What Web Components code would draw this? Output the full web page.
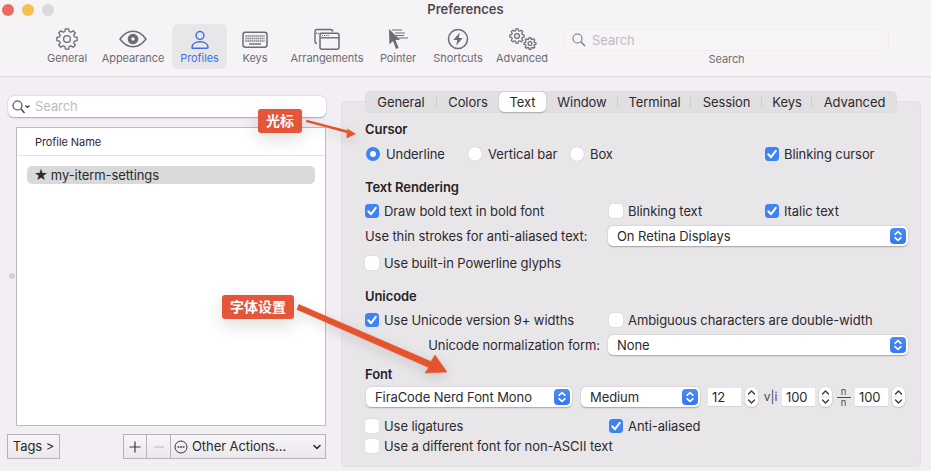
<!DOCTYPE html>
<html>
<head>
<meta charset="utf-8">
<title>Preferences</title>
<style>
  html, body { margin: 0; padding: 0; background: #f2eef3; }
</style>
</head>
<body>
<pref-window>
  <pref-toolbar slot="toolbar" heading="Preferences">
    <tool-item icon="general" wide="54">General</tool-item>
    <tool-item icon="appearance" wide="78">Appearance</tool-item>
    <tool-item icon="profiles" wide="55" active>Profiles</tool-item>
    <tool-item icon="keys" wide="56">Keys</tool-item>
    <tool-item icon="arrangements" wide="88">Arrangements</tool-item>
    <tool-item icon="pointer" wide="54">Pointer</tool-item>
    <tool-item icon="shortcuts" wide="66">Shortcuts</tool-item>
    <tool-item icon="advanced" wide="62">Advanced</tool-item>
    <tool-search></tool-search>
  </pref-toolbar>

  <profile-sidebar slot="sidebar">
    <profile-row>my-iterm-settings</profile-row>
  </profile-sidebar>

  <pref-tabs slot="tabs">
    <pref-tab wide="72" sep>General</pref-tab>
    <pref-tab wide="62">Colors</pref-tab>
    <pref-tab wide="47" selected>Text</pref-tab>
    <pref-tab wide="72" sep>Window</pref-tab>
    <pref-tab wide="73" sep>Terminal</pref-tab>
    <pref-tab wide="71" sep>Session</pref-tab>
    <pref-tab wide="50" sep>Keys</pref-tab>
    <pref-tab wide="85">Advanced</pref-tab>
  </pref-tabs>

  <pref-pane slot="pane">
    <pref-heading>Cursor</pref-heading>
    <pref-row top="5" cols="102px 102px 196px 1fr">
      <mac-radio checked>Underline</mac-radio>
      <mac-radio>Vertical bar</mac-radio>
      <mac-radio>Box</mac-radio>
      <mac-check checked>Blinking cursor</mac-check>
    </pref-row>

    <pref-heading top="13">Text Rendering</pref-heading>
    <pref-row top="4">
      <mac-check checked>Draw bold text in bold font</mac-check>
      <mac-check>Blinking text</mac-check>
      <mac-check checked>Italic text</mac-check>
    </pref-row>
    <pref-row top="5" cols="243px 300px">
      <pref-label>Use thin strokes for anti-aliased text:</pref-label>
      <mac-select>On Retina Displays</mac-select>
    </pref-row>
    <pref-row top="7">
      <mac-check>Use built-in Powerline glyphs</mac-check>
    </pref-row>

    <pref-heading top="13">Unicode</pref-heading>
    <pref-row top="4">
      <mac-check checked>Use Unicode version 9+ widths</mac-check>
      <mac-check class="span">Ambiguous characters are double-width</mac-check>
    </pref-row>
    <pref-row top="5" cols="235px 300px" gap="8">
      <pref-label end>Unicode normalization form:</pref-label>
      <mac-select>None</mac-select>
    </pref-row>

    <pref-heading top="9">Font</pref-heading>
    <font-row top="3">
      <mac-select ml="1" wide="206">FiraCode Nerd Font Mono</mac-select>
      <mac-select ml="9" wide="119">Medium</mac-select>
      <num-field ml="8" value="12"></num-field>
      <glyph-mark kind="vli" wide="24"></glyph-mark>
      <num-field value="100"></num-field>
      <glyph-mark kind="nn" wide="23"></glyph-mark>
      <num-field value="100"></num-field>
    </font-row>
    <pref-row top="9">
      <mac-check>Use ligatures</mac-check>
      <mac-check checked>Anti-aliased</mac-check>
    </pref-row>
    <pref-row>
      <mac-check class="span">Use a different font for non-ASCII text</mac-check>
    </pref-row>
  </pref-pane>

  <callout-tag slot="overlay" x="258" y="109" wide="44">光标</callout-tag>
  <callout-tag slot="overlay" x="222" y="295" wide="72">字体设置</callout-tag>
</pref-window>

<script>
const SANS = '"Inter", "Liberation Sans", "Noto Sans CJK SC", sans-serif';

class PrefElement extends HTMLElement {
  shadow = null;

  get stylez () {
    return `:host {display: block}`;
  }

  constructor () {
    super();
    this.shadow = this.attachShadow({ mode: 'open' });
  }

  connectedCallback () {
    if (this.hasAttribute('top')) this.style.marginTop = this.getAttribute('top') + 'px';
    if (this.hasAttribute('ml')) this.style.marginLeft = this.getAttribute('ml') + 'px';
    if (this.hasAttribute('wide')) this.style.width = this.getAttribute('wide') + 'px';
    this.shadow.innerHTML = `<style>${this.stylez}</style>${this.render()}`;
  }

  render () { return '<slot></slot>'; }
}

// gear outline, teeth are just a polygon with round joins
function gearPath (cx, cy, R, r, n) {
  const step = Math.PI * 2 / n;
  const pts = [];
  for (let i = 0; i < n; i++) {
    const a = i * step - Math.PI / 2;
    [[r, -0.34], [R, -0.2], [R, 0.2], [r, 0.34]].forEach(([rad, off]) => {
      const t = a + off * step;
      pts.push((cx + rad * Math.cos(t)).toFixed(2) + ' ' + (cy + rad * Math.sin(t)).toFixed(2));
    });
  }
  return 'M' + pts.join('L') + 'Z';
}

const ICONS = {
  general: `<path d="${gearPath(15, 12, 10.3, 7.8, 8)}" fill="none" stroke="currentColor" stroke-width="1.3" stroke-linejoin="round"/>
    <circle cx="15" cy="12" r="3.4" fill="none" stroke="currentColor" stroke-width="1.3"/>`,
  appearance: `<path d="M2 12C6 6.6 10.2 4.2 15 4.2S24 6.6 28 12C24 17.4 19.8 19.8 15 19.8S6 17.4 2 12Z" fill="none" stroke="currentColor" stroke-width="1.5"/>
    <circle cx="15" cy="12" r="5.3" fill="currentColor"/><circle cx="15" cy="12" r="1.7" fill="#f5f2f6"/>`,
  profiles: `<circle cx="15" cy="8.5" r="3.9" fill="none" stroke="currentColor" stroke-width="1.5"/>
    <path d="M7 20.5C7 16.8 10.5 14.8 15 14.8S23 16.8 23 20.5C23 21 22.6 21.2 22 21.2H8C7.4 21.2 7 21 7 20.5Z" fill="none" stroke="currentColor" stroke-width="1.5"/>`,
  keys: `<rect x="3" y="5.3" width="24" height="15" rx="2.5" fill="none" stroke="currentColor" stroke-width="1.5"/>
    <path d="M5.5 9H24.5M5.5 11.5H24.5M5.5 14H24.5" stroke="currentColor" stroke-width="1.4" stroke-dasharray="1.3 .7"/>
    <path d="M9 17H21" stroke="currentColor" stroke-width="1.4"/>`,
  arrangements: `<path d="M5 16.5C3.8 16.5 3 15.7 3 14.5V4.5C3 3.2 3.8 2.5 5 2.5H18.5C19.8 2.5 20.7 3.2 20.8 4.8" fill="none" stroke="currentColor" stroke-width="1.4"/>
    <rect x="8" y="6.3" width="19" height="16" rx="2" fill="none" stroke="currentColor" stroke-width="1.5"/>
    <path d="M8 10.8H27" stroke="currentColor" stroke-width="1.4"/>
    <path d="M10 8.5H17M4 6.3H11" stroke="currentColor" stroke-width="1.2" stroke-dasharray="1.2 .9"/>`,
  pointer: `<path d="M6 2L6.4 17.5L10 14L13 22L15.6 21L12.5 13L17 12.8Z" fill="currentColor"/>
    <path d="M9 3H19M12 6H22M13 8.5H21M15 11H25" stroke="currentColor" stroke-width="1" fill="none"/>`,
  shortcuts: `<circle cx="15" cy="12" r="9.5" fill="none" stroke="currentColor" stroke-width="1.5"/>
    <path d="M16.8 5.5L10.3 13H14.3L13.2 18.5L19.7 11H15.7Z" fill="currentColor"/>`,
  advanced: `<path d="${gearPath(10, 9, 7.2, 5.5, 8)}" fill="none" stroke="currentColor" stroke-width="1.2" stroke-linejoin="round"/>
    <circle cx="10" cy="9" r="2.4" fill="none" stroke="currentColor" stroke-width="1.2"/>
    <path d="${gearPath(23, 16.5, 6, 4.5, 8)}" fill="none" stroke="currentColor" stroke-width="1.2" stroke-linejoin="round"/>
    <circle cx="23" cy="16.5" r="1.9" fill="none" stroke="currentColor" stroke-width="1.2"/>`
};

const UPDOWN = `<svg width="16" height="16" viewBox="0 0 16 16"><path d="M5 6.3L8 3.6L11 6.3M5 9.7L8 12.4L11 9.7" fill="none" stroke="#fff" stroke-width="1.6" stroke-linecap="round" stroke-linejoin="round"/></svg>`;

class PrefWindow extends PrefElement {
  get stylez () {
    return `
    :host {
      display: block; position: relative; width: 931px; height: 471px; overflow: hidden;
      background: #f2eef3; color: #2c2a2d;
      font: 13px/20px ${SANS}; letter-spacing: -.08px;
    }
    .body { display: flex; }
    .right { width: 580px; padding-top: 14px; }
    .tabs { position: relative; z-index: 1; margin: 0 0 -12px 24px; }
    .dot { position: absolute; left: 9px; top: 273px; width: 6px; height: 6px; border-radius: 50%; background: #d4d1d5; }
    svg.arrows { position: absolute; left: 0; top: 0; pointer-events: none; filter: drop-shadow(0 4px 6px rgba(0,0,0,.14)); }
    `;
  }

  render () {
    return `
    <slot name="toolbar"></slot>
    <div class="body">
      <slot name="sidebar"></slot>
      <div class="right">
        <div class="tabs"><slot name="tabs"></slot></div>
        <slot name="pane"></slot>
      </div>
    </div>
    <span class="dot"></span>
    <svg class="arrows" width="931" height="471" viewBox="0 0 931 471">
      <path d="M306.5 119.8L348 130.6L346.7 128.3L356 134L346.7 138.3L346.6 133L306 122Z" fill="#e4552f"/>
      <path d="M299 304.5L431 361.5L435 355L447 372L425 373L428.7 367.5L297 309.5Z" fill="#e4552f" stroke="#e4552f" stroke-width=".6" stroke-linejoin="round"/>
    </svg>
    <slot name="overlay"></slot>`;
  }
}

class PrefToolbar extends PrefElement {
  get stylez () {
    return `
    :host { display: block; height: 76px; background: #f6f3f7; border-bottom: 1px solid #dbd8dc; }
    .title { display: grid; grid-template-columns: 100px 1fr 100px; height: 24px; align-items: start; }
    .lights { display: flex; gap: 8px; padding: 4px 0 0 2px; }
    .lights i { width: 12px; height: 12px; border-radius: 50%; }
    h1 { margin: 0; font: 600 13px/19px ${SANS}; letter-spacing: 0; color: #4d4b4e; text-align: center; }
    .items { display: flex; padding-left: 40px; }
    `;
  }

  render () {
    return `
    <div class="title">
      <div class="lights">
        <i style="background:#ee6a5f"></i><i style="background:#f6bf4f"></i><i style="background:#dbd8dc"></i>
      </div>
      <h1>${this.getAttribute('heading')}</h1>
    </div>
    <div class="items"><slot></slot></div>`;
  }
}

class ToolItem extends PrefElement {
  get stylez () {
    return `
    :host {
      display: flex; flex-direction: column; align-items: center; box-sizing: border-box;
      height: 45px; padding-top: 3px; border-radius: 6px; flex: none;
      color: #6e6c70; font-size: 11px; line-height: 14px;
    }
    :host([active]) { background: #e9e6ea; color: #3a72e6; }
    svg { display: block; flex: none; }
    `;
  }

  render () {
    return `<svg width="30" height="24" viewBox="0 0 30 24">${ICONS[this.getAttribute('icon')]}</svg><slot></slot>`;
  }
}

class ToolSearch extends PrefElement {
  get stylez () {
    return `
    :host { display: flex; flex-direction: column; align-items: center; margin-left: 11px; width: 325px; color: #6e6c70; font-size: 11px; line-height: 14px; }
    .box {
      box-sizing: border-box; width: 100%; height: 22px; margin: 5px 0 0; display: flex; align-items: center; gap: 6px;
      padding: 0 0 1px 7px; background: #f7f4f8; border: 1px solid #efebef; border-radius: 5px;
      color: #bdbbbe; font-size: 13px;
    }
    .cap { margin-top: 1px; }
    `;
  }

  render () {
    return `
    <div class="box">
      <svg width="14" height="14" viewBox="0 0 14 14"><circle cx="5.5" cy="5.5" r="4.5" fill="none" stroke="#77757a" stroke-width="1.1"/><path d="M9 9L13 13" stroke="#77757a" stroke-width="1.3"/></svg>
      <span>Search</span>
    </div>
    <div class="cap">Search</div>`;
  }
}

class ProfileSidebar extends PrefElement {
  get stylez () {
    return `
    :host { display: block; width: 341px; flex: none; }
    .find {
      box-sizing: border-box; width: 318px; height: 21px; margin: 19px 0 0 8px; display: flex; align-items: center; gap: 4px; padding: 0 0 1px 4px;
      background: #fff; border-radius: 6px; box-shadow: 0 .5px 1.5px rgba(0,0,0,.3); color: #bcbcbc;
    }
    .find svg { margin-top: 1px; }
    .list {
      box-sizing: border-box; width: 310px; height: 299px; margin: 10px 0 0 16px;
      background: #fff; border: 1px solid #bdbbbe;
    }
    .head { height: 27px; line-height: 29px; padding-left: 18px; font-size: 11px; border-bottom: 1px solid #e4e2e5; }
    .rows { padding: 10px 10px 0; }
    .btns { display: flex; width: 319px; height: 25px; margin: 8px 0 0 7px; font-size: 13px; }
    .btn {
      box-sizing: border-box; display: flex; align-items: center; justify-content: center; height: 25px;
      border: 1px solid #b5b3b6; background: linear-gradient(#f7f5f8, #ebe8ec);
    }
    .tags { width: 53px; padding-bottom: 1px; }
    .plus { width: 24px; margin-left: 63px; }
    .minus { width: 23px; border-left: 0; border-right: 0; color: #bdbbbe; }
    .other { flex: 1; justify-content: flex-start; padding: 0 0 1px 3px; gap: 4px; }
    .other svg { margin-top: 1px; }
    .other svg:last-child { margin-left: auto; margin-right: 3px; }
    `;
  }

  render () {
    return `
    <div class="find">
      <svg width="19" height="14" viewBox="0 0 19 14"><circle cx="5.5" cy="5.5" r="4.5" fill="none" stroke="#3a383b" stroke-width="1.1"/><path d="M9 9L12.5 13" stroke="#3a383b" stroke-width="1.3"/><path d="M13.5 5.5L15.5 7.5L17.5 5.5" fill="none" stroke="#3a383b" stroke-width="1.1"/></svg>
      <span>Search</span>
    </div>
    <div class="list">
      <div class="head">Profile Name</div>
      <div class="rows"><slot></slot></div>
    </div>
    <div class="btns">
      <div class="btn tags">Tags &gt;</div>
      <div class="btn plus"><svg width="12" height="12" viewBox="0 0 12 12"><path d="M6 .5V11.5M.5 6H11.5" stroke="#3a383b" stroke-width="1.2"/></svg></div>
      <div class="btn minus"><svg width="12" height="12" viewBox="0 0 12 12"><path d="M1 6H11" stroke="#c4c2c5" stroke-width="1.2"/></svg></div>
      <div class="btn other">
        <svg width="14" height="14" viewBox="0 0 14 14"><circle cx="7" cy="7" r="6" fill="none" stroke="#3a383b" stroke-width="1"/><path d="M4 7H4.8M6.6 7H7.4M9.2 7H10" stroke="#3a383b" stroke-width="1.3" stroke-linecap="round"/></svg>
        <span>Other Actions...</span>
        <svg width="10" height="8" viewBox="0 0 10 8"><path d="M2 2.5L5 5.5L8 2.5" fill="none" stroke="#2c2a2d" stroke-width="1.6" stroke-linecap="round" stroke-linejoin="round"/></svg>
      </div>
    </div>`;
  }
}

class ProfileRow extends PrefElement {
  get stylez () {
    return `
    :host { display: flex; align-items: center; height: 18px; padding-left: 7px; gap: 3px; border-radius: 5px; background: #d9d9d9; }
    .star { font: 15.5px/18px "DejaVu Sans", sans-serif; }
    `;
  }

  render () {
    return `<span class="star">★</span><slot></slot>`;
  }
}

class PrefTabs extends PrefElement {
  get stylez () {
    return `
    :host { display: flex; box-sizing: border-box; width: 532px; height: 22px; align-items: center; background: #e2dfe3; border-radius: 6px; box-shadow: inset 0 0 0 .5px #dcd9dd; }
    `;
  }
  render () { return '<slot></slot>'; }
}

class PrefTab extends PrefElement {
  get stylez () {
    return `
    :host { display: block; position: relative; height: 20px; line-height: 20px; text-align: center; flex: none; }
    :host([selected]) { background: #fff; border-radius: 5px; box-shadow: 0 .5px 1.5px rgba(0,0,0,.25); }
    :host([sep])::after { content: ""; position: absolute; right: 0; top: 4px; height: 12px; width: 1px; background: #cfccd0; }
    `;
  }
}

class PrefPane extends PrefElement {
  get stylez () {
    return `
    :host { display: block; box-sizing: border-box; width: 580px; height: 366px; padding: 17px 0 0 23px; background: #e9e6ea; border: 1px solid #e4e1e5; border-radius: 5px; }
    `;
  }
}

class PrefHeading extends PrefElement {
  get stylez () {
    return `:host { display: block; height: 20px; font-weight: 600; color: #252326; }`;
  }
}

class PrefRow extends PrefElement {
  get stylez () {
    return `
    :host { display: grid; height: 20px; align-items: center; grid-template-columns: 244px 156px 1fr; }
    ::slotted(.span) { grid-column: span 2; white-space: nowrap; }
    `;
  }

  connectedCallback () {
    super.connectedCallback();
    if (this.hasAttribute('cols')) this.style.gridTemplateColumns = this.getAttribute('cols');
    if (this.hasAttribute('gap')) this.style.columnGap = this.getAttribute('gap') + 'px';
  }
}

class FontRow extends PrefElement {
  get stylez () {
    return `:host { display: flex; height: 20px; align-items: center; }`;
  }
}

class PrefLabel extends PrefElement {
  get stylez () {
    return `
    :host { display: block; white-space: nowrap; }
    :host([end]) { text-align: right; }
    `;
  }
}

class MacCheck extends PrefElement {
  get stylez () {
    return `
    :host { display: flex; align-items: center; gap: 5px; white-space: nowrap; }
    .box { width: 14px; height: 14px; flex: none; border-radius: 3.5px; background: #fff; box-shadow: 0 0 1px rgba(0,0,0,.3); display: block; }
    :host([checked]) .box { background: #3f82f6; box-shadow: none; }
    svg { display: block; }
    `;
  }

  render () {
    const mark = this.hasAttribute('checked')
      ? `<svg width="14" height="14" viewBox="0 0 14 14"><path d="M3.3 7.3L6 10.2L10.8 3.8" fill="none" stroke="#fff" stroke-width="2" stroke-linecap="round" stroke-linejoin="round"/></svg>`
      : '';
    return `<span class="box">${mark}</span><slot></slot>`;
  }
}

class MacRadio extends PrefElement {
  get stylez () {
    return `
    :host { display: flex; align-items: center; gap: 6px; white-space: nowrap; padding-left: 1px; }
    .dot { width: 14px; height: 14px; flex: none; border-radius: 50%; background: #fff; box-shadow: 0 0 1px rgba(0,0,0,.3); position: relative; }
    :host([checked]) .dot { background: #3f82f6; box-shadow: none; }
    :host([checked]) .dot::after { content: ""; position: absolute; left: 4px; top: 4px; width: 6px; height: 6px; border-radius: 50%; background: #fff; }
    `;
  }

  render () {
    return `<span class="dot"></span><slot></slot>`;
  }
}

class MacSelect extends PrefElement {
  get stylez () {
    return `
    :host {
      display: flex; align-items: center; justify-content: space-between; box-sizing: border-box; height: 20px; flex: none;
      padding: 0 2px 0 9px; background: #fff; border-radius: 5px; box-shadow: 0 .5px 1.5px rgba(0,0,0,.3);
    }
    .cap { width: 16px; height: 16px; border-radius: 4px; background: linear-gradient(#4a8cf8, #3676ef); display: block; }
    svg { display: block; }
    `;
  }

  render () {
    return `<slot></slot><span class="cap">${UPDOWN}</span>`;
  }
}

class NumField extends PrefElement {
  get stylez () {
    return `
    :host { display: flex; align-items: center; gap: 4px; flex: none; }
    .val { box-sizing: border-box; width: 33px; height: 18px; line-height: 18px; padding-left: 4px; background: #fff; box-shadow: 0 1px 0 #d6d3d7; }
    .step { display: block; width: 13px; height: 20px; background: #fff; border-radius: 6px; box-shadow: 0 .5px 1.5px rgba(0,0,0,.3); }
    svg { display: block; }
    `;
  }

  render () {
    return `
    <span class="val">${this.getAttribute('value')}</span>
    <span class="step"><svg width="13" height="20" viewBox="0 0 13 20"><path d="M3.5 7L6.5 4L9.5 7M3.5 13L6.5 16L9.500 13" fill="none" stroke="#3a383b" stroke-width="1.4" stroke-linecap="round" stroke-linejoin="round"/><path d="M0 10H13" stroke="#e6e3e7" stroke-width="1"/></svg></span>`;
  }
}

class GlyphMark extends PrefElement {
  get stylez () {
    return `
    :host { display: flex; flex-direction: column; align-items: center; justify-content: center; flex: none; height: 20px; color: #4a484b; font-size: 9.5px; line-height: 9.5px; }
    .vli { line-height: 14px; font-size: 12px; padding-left: 1px; white-space: nowrap; }
    .rule { width: 14px; height: 1px; background: #4a484b; flex: none; }
    `;
  }

  render () {
    if (this.getAttribute('kind') === 'vli') return `<span class="vli">v|i</span>`;
    return `<span>n</span><span class="rule"></span><span>n</span>`;
  }
}

class CalloutTag extends PrefElement {
  get stylez () {
    return `
    :host {
      display: block; position: absolute; box-sizing: border-box; height: 24px; text-align: center;
      background: #e4553a; color: #fff; border-radius: 3px; font: 600 14px/24px ${SANS}; letter-spacing: 0;
      box-shadow: 0 6px 18px rgba(0,0,0,.14);
    }
    `;
  }

  connectedCallback () {
    super.connectedCallback();
    this.style.left = this.getAttribute('x') + 'px';
    this.style.top = this.getAttribute('y') + 'px';
  }
}

customElements.define('pref-window', PrefWindow);
customElements.define('pref-toolbar', PrefToolbar);
customElements.define('tool-item', ToolItem);
customElements.define('tool-search', ToolSearch);
customElements.define('profile-sidebar', ProfileSidebar);
customElements.define('profile-row', ProfileRow);
customElements.define('pref-tabs', PrefTabs);
customElements.define('pref-tab', PrefTab);
customElements.define('pref-pane', PrefPane);
customElements.define('pref-heading', PrefHeading);
customElements.define('pref-row', PrefRow);
customElements.define('font-row', FontRow);
customElements.define('pref-label', PrefLabel);
customElements.define('mac-check', MacCheck);
customElements.define('mac-radio', MacRadio);
customElements.define('mac-select', MacSelect);
customElements.define('num-field', NumField);
customElements.define('glyph-mark', GlyphMark);
customElements.define('callout-tag', CalloutTag);
</script>
</body>
</html>
